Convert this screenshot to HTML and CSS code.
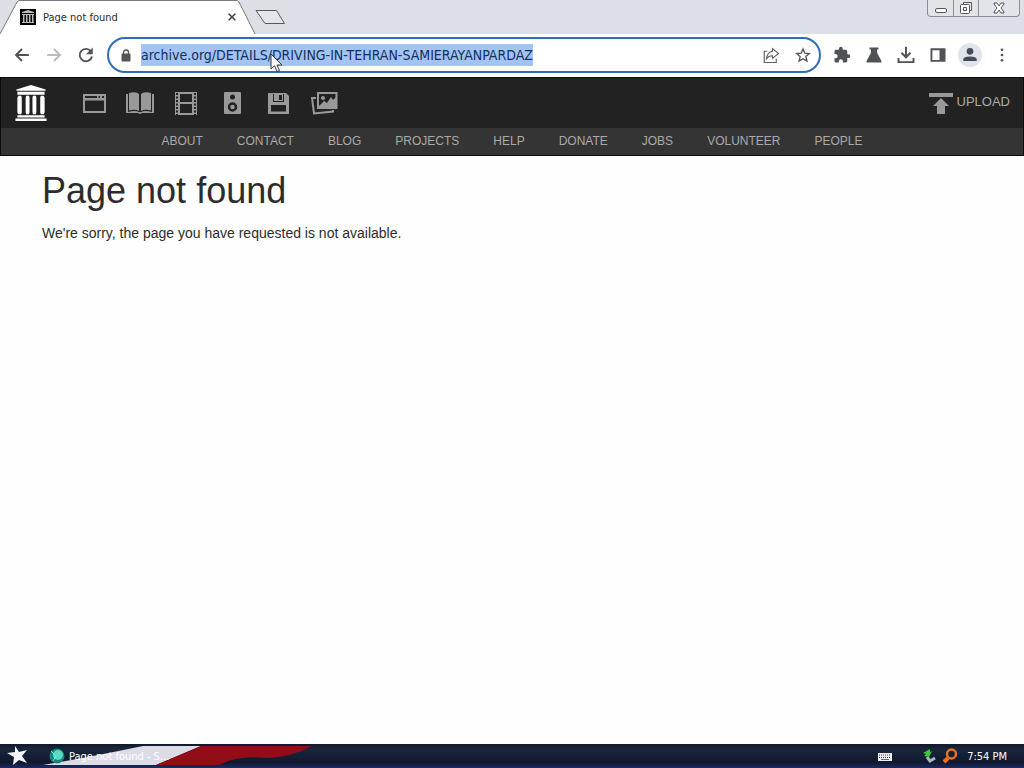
FILE: index.html
```html
<!DOCTYPE html>
<html lang="en">
<head>
<meta charset="utf-8">
<title>Page not found</title>
<link rel="stylesheet" href="styles.css">
</head>
<body>
<div class="tabstrip">
  <div class="tab">
    <svg class="tab-shape" viewBox="0 0 256 34" aria-hidden="true"><path d="M0 34 17 2Q18 .5 20 .5H236Q238 .5 239 2L255 34Z" fill="#fff"/><path d="M0 34 17 2Q18 .5 20 .5H236Q238 .5 239 2L255 34" fill="none" stroke="#777a7e"/></svg>
    <svg class="favicon" viewBox="0 0 16 16" aria-hidden="true"><path d="M0 0h16v16H0z" fill="#000"/><path d="M8 1 14 3v1H2V3zM2 5h12v1H2zM2 13h12v1H2zM3 6h1.500v7H3zM6 6h1.500v7H6zM9 6h1.500v7H9zM12 6h1.500v7H12z" fill="#bbb"/></svg>
    <span class="tab-title">Page not found</span>
    <button class="tab-close" aria-label="Close tab"><svg width="8" height="8" viewBox="0 0 8 8"><path d="m.7.700 6.600 6.600m0-6.600L.7 7.300" stroke="#444" stroke-width="1.600"/></svg></button>
  </div>
  <button class="new-tab" aria-label="New tab"><svg width="32" height="16" viewBox="0 0 32 16"><path d="M1 1.500h20.500l8 13H10z" fill="#e3e6eb" stroke="#55585c"/></svg></button>
  <div class="window-controls">
    <button aria-label="Minimize"><svg width="14" height="14" viewBox="0 0 14 14"><rect x="1.500" y="7.500" width="11" height="4" rx="1.500" fill="#fff" stroke="#555"/></svg></button>
    <button aria-label="Restore"><svg width="14" height="14" viewBox="0 0 14 14"><path d="M4.500 3V1.500h8v8H11" fill="#eee" stroke="#555"/><rect x="1.500" y="3.500" width="9" height="9" rx="1" fill="#fff" stroke="#555"/><path d="M4.500 6.500h3v3h-3z" fill="none" stroke="#555"/></svg></button>
    <button class="close-window" aria-label="Close"><svg width="14" height="12" viewBox="0 0 14 12"><path d="M2 1h3l2 3 2-3h3v1L9 6l3 4v1H9L7 8l-2 3H2v-1l3-4-3-4z" fill="#fff" stroke="#555"/></svg></button>
  </div>
</div>

<div class="toolbar">
  <button class="tool" aria-label="Back"><svg viewBox="0 0 24 24"><path d="M21 12H4m8-8-8 8 8 8" fill="none" stroke="#505256" stroke-width="2.500"/></svg></button>
  <button class="tool" aria-label="Forward"><svg viewBox="0 0 24 24"><path d="M3 12h17m-8-8 8 8-8 8" fill="none" stroke="#b9bbbd" stroke-width="2.500"/></svg></button>
  <button class="tool" aria-label="Reload"><svg viewBox="0 0 24 24"><path d="M18.500 7A8.300 8.300 0 1 0 20 14" fill="none" stroke="#505256" stroke-width="2.500"/><path d="M21 2v9h-9z" fill="#505256"/></svg></button>
  <div class="omnibox">
    <svg class="lock" viewBox="0 0 10 13" aria-hidden="true"><path d="M2.500 5V3.500a2.500 2.500 0 0 1 5 0V5" fill="none" stroke="#555" stroke-width="1.400"/><rect x=".5" y="4.500" width="9" height="8" rx="1" fill="#555"/></svg>
    <input class="url" id="url" type="text" aria-label="Address" spellcheck="false" value="archive.org/DETAILS/DRIVING-IN-TEHRAN-SAMIERAYANPARDAZ">
    <button class="tool" aria-label="Share"><svg viewBox="0 0 24 24"><path d="M7 7H3v15h16v-5" fill="none" stroke="#5c5e62" stroke-width="1.500"/><path d="M14 3.500 22 10l-8 6.500V13q-5-.2-8 4 1-9 8-10z" fill="none" stroke="#5c5e62" stroke-width="1.500"/></svg></button>
    <button class="tool" aria-label="Bookmark"><svg class="star" viewBox="0 0 24 24"><path d="m12 3 2.700 6.300 6.800.600-5.200 4.500 1.600 6.600-5.900-3.500L6.100 21l1.600-6.600-5.200-4.500 6.800-.6z" fill="none" stroke="#505256" stroke-width="2"/></svg></button>
    <svg class="pointer" viewBox="0 0 13 20" aria-hidden="true"><path d="M1 1v15l3.500-3.300L7 18.500l2.500-1L7 12h5z" fill="#fff" stroke="#333"/></svg>
  </div>
  <button class="tool" aria-label="Extensions"><svg viewBox="0 0 24 24"><path d="M20.500 11H19V7c0-1.100-.9-2-2-2h-4V3.500a2.500 2.500 0 0 0-5 0V5H4c-1.100 0-2 .900-2 2v3.800h1.500a2.700 2.700 0 0 1 0 5.400H2V20c0 1.100.9 2 2 2h3.800v-1.500a2.700 2.700 0 0 1 5.400 0V22H17c1.100 0 2-.9 2-2v-4h1.500a2.500 2.500 0 0 0 0-5z" fill="#505256"/></svg></button>
  <button class="tool" aria-label="Experiments"><svg viewBox="0 0 24 24"><path d="M6 2h12v2.500h-2V9l6 11q.6 2-1 2H3q-1.600 0-1-2L8 9V4.500H6z" fill="#505256"/></svg></button>
  <button class="tool" aria-label="Downloads"><svg viewBox="0 0 24 24"><path d="M12 1v14M6 9l6 6 6-6M2 16v5.500h20V16" fill="none" stroke="#505256" stroke-width="2.600"/></svg></button>
  <button class="tool" aria-label="Side panel"><svg viewBox="0 0 24 24"><path d="M2 3h20v18H2zm2.500 2.500v13H14v-13z" fill="#505256" fill-rule="evenodd"/></svg></button>
  <button class="tool profile" aria-label="Profile"><svg viewBox="0 0 24 24"><circle cx="12" cy="7" r="4.500" fill="#454b57"/><path d="M3 20v-2q0-4 9-4t9 4v2z" fill="#454b57"/></svg></button>
  <button class="tool" aria-label="Menu"><svg viewBox="0 0 24 24"><g fill="#505256"><circle cx="12" cy="5" r="1.800"/><circle cx="12" cy="12" r="1.800"/><circle cx="12" cy="19" r="1.800"/></g></svg></button>
</div>

<header class="site-header">
  <div class="topnav">
    <a class="logo" href="#" aria-label="Internet Archive"><svg width="32" height="36" viewBox="0 0 32 37"><path fill="#fff" d="M16 0 31 4.500V6H1V4.500zM2 7h28v3H2zM2 31h28v2.500H2zM0 34.500h32V37H0zM3 11h3l.5 2v15l-.5 2H3l-1-2V13zM11 11h3l.5 2v15l-.5 2h-3l-.5-2V13zM18 11h3l.5 2v15l-.5 2h-3l-.5-2V13zM26 11h3l1 2v15l-1 2h-3l-.5-2V13z"/></svg></a>
    <nav class="media" aria-label="Media">
      <a href="#" aria-label="Web"><svg width="23" height="19" viewBox="0 0 23 19"><path fill="#999" fill-rule="evenodd" d="M0 0h23v19H0zM2 6.500V17h19V6.500zM2 2v2h12V2zm13.500 0v2H17V2zm3.500 0v2h2V2z"/></svg></a>
      <a href="#" aria-label="Texts"><svg width="28" height="22" viewBox="0 0 28 22"><path fill="#999" d="M3 1q7-2 10 1v17q-4-2-10-.5zM15 2q3-3 10-1v17.500q-6-1.500-10 .5zM0 2h2v18q7-2 11 0h2q4-2 11 0V2h2v19H16l-2 1-2-1H0z"/></svg></a>
      <a href="#" aria-label="Video"><svg width="22" height="23" viewBox="0 0 22 23"><path fill="#999" fill-rule="evenodd" d="M0 0h22v23H0zM5 2v8h12V2zm0 10v9h12v-9z"/><path d="M2 1v22M20 1v22" stroke="#222" stroke-width="2" stroke-dasharray="2 1.500"/></svg></a>
      <a href="#" aria-label="Audio"><svg width="17" height="22" viewBox="0 0 17 22"><rect width="17" height="22" rx="1" fill="#999"/><circle cx="8.500" cy="5" r="2.500" fill="#222"/><circle cx="8.500" cy="15" r="3.500" fill="none" stroke="#222" stroke-width="2.500"/></svg></a>
      <a href="#" aria-label="Software"><svg width="21" height="21" viewBox="0 0 21 21"><path fill="#999" fill-rule="evenodd" d="M0 0h18l3 3v18H0zM5 1v8h11V1zm-2 11v6.500h15V12z"/><path d="M6 1h9v7H6z" fill="#999"/><path d="M11 2h3v5h-3z" fill="#222"/></svg></a>
      <a href="#" aria-label="Images"><svg width="27" height="23" viewBox="0 0 27 23"><path fill="none" stroke="#999" stroke-width="2" d="M5 6H1l2 15.500 19-2V18M7 1h18.500v15H7z"/><circle cx="12" cy="6" r="2" fill="#999"/><path d="m8 14 5-5 3 2 4-6 2 3 3-3v10H8z" fill="#999"/></svg></a>
    </nav>
    <a class="upload" href="#"><svg width="24" height="21" viewBox="0 0 24 21" aria-hidden="true"><path fill="#999" d="M0 0h24v4H0zM12 5l8 8h-4v8H8v-8H4z"/></svg><span>UPLOAD</span></a>
  </div>
  <nav class="subnav" aria-label="About">
    <a href="#">ABOUT</a><a href="#">CONTACT</a><a href="#">BLOG</a><a href="#">PROJECTS</a><a href="#">HELP</a><a href="#">DONATE</a><a href="#">JOBS</a><a href="#">VOLUNTEER</a><a href="#">PEOPLE</a>
  </nav>
</header>

<main class="content">
  <h1>Page not found</h1>
  <p>We're sorry, the page you have requested is not available.</p>
</main>

<footer class="taskbar">
  <svg class="flag" viewBox="0 0 340 24" aria-hidden="true"><path d="M43 21Q90 13 143 2h58l-45 19z" fill="#dcdce6"/><path d="M201 2h111q-20 11-45 12-30-3-48 7h-63z" fill="#920d18"/></svg>
  <button class="start" aria-label="Start"><svg width="22" height="20" viewBox="0 0 22 20"><path d="m8 0 4 6 8-2-5 6 5 7-8-3-6 5 1-8-7-4 8-1z" fill="#f4f4f8"/></svg></button>
  <button class="task"><svg width="16" height="16" viewBox="0 0 16 16" aria-hidden="true"><circle cx="8" cy="8" r="7.500" fill="#16847c"/><circle cx="9" cy="7" r="5" fill="#58dbc0"/><path d="m2 3 5 5-3 5" fill="none" stroke="#8de0cd"/></svg><span>Page not found - S...</span></button>
  <div class="tray">
    <svg class="keyboard" width="14" height="8" viewBox="0 0 14 8" aria-hidden="true"><path d="M0 0h14v8H0z" fill="#eee"/><path d="M1 2h12M1 4.500h12" stroke="#334" stroke-dasharray="1 1"/><path d="M3 6.500h8" stroke="#667"/></svg>
    <svg width="14" height="15" viewBox="0 0 14 15" aria-hidden="true"><path d="m4 8 3 4 5-3" fill="none" stroke="#aab5bb" stroke-width="3"/><path d="M0 4 7 0v3l2-1-3 6-5-1 2-2z" fill="#43c43c"/></svg>
    <svg width="16" height="16" viewBox="0 0 16 16" aria-hidden="true"><circle cx="9.500" cy="6" r="4.500" fill="none" stroke="#e8711c" stroke-width="2.500"/><path d="m6 10-4 4" stroke="#e8711c" stroke-width="4"/></svg>
    <time class="clock">7:54 PM</time>
  </div>
</footer>
<script src="main.js"></script>
</body>
</html>
```

FILE: styles.css
```css
* { box-sizing: border-box; }

body {
  margin: 0;
  min-height: 100vh;
  display: flex;
  flex-direction: column;
  background: #fefefe;
  color: #2c2c2c;
  font-family: "Liberation Sans", Arial, sans-serif;
  font-size: 14px;
}

button {
  margin: 0;
  padding: 0;
  border: 0;
  background: none;
  color: inherit;
  font: inherit;
}

a { color: inherit; text-decoration: none; }
svg { display: block; flex: none; }

/* Tab strip */
.tabstrip {
  display: flex;
  height: 34px;
  background: #dcdfe6;
}

.tab {
  position: relative;
  display: flex;
  align-items: center;
  width: 255px;
  padding: 0 15px 0 20px;
}

.tab-shape { position: absolute; inset: 0; width: 256px; height: 34px; }
.favicon { position: relative; width: 16px; height: 16px; }

.tab-title {
  position: relative;
  flex: 1;
  margin-left: 7px;
  font: 11px "DejaVu Sans Condensed", "DejaVu Sans", sans-serif;
}

.tab-close { position: relative; padding: 4px; }
.new-tab { align-self: center; }

.window-controls {
  display: flex;
  align-self: flex-start;
  height: 17px;
  margin: 0 4px 0 auto;
  border: 1px solid #8b8e94;
  border-top: 0;
  border-radius: 0 0 4px 4px;
  background: #e2e4e9;
}

.window-controls button { display: grid; place-items: center; width: 25px; }
.window-controls button + button { border-left: 1px solid #8b8e94; }
.window-controls .close-window { width: 41px; }

/* Toolbar */
.toolbar {
  display: flex;
  align-items: center;
  gap: 8px;
  height: 43px;
  padding: 0 10px 1px;
  background: #fff;
}

.tool {
  display: grid;
  flex: none;
  place-items: center;
  width: 24px;
  height: 24px;
}

.tool svg { width: 18px; height: 18px; }
.tool .star { width: 16px; height: 16px; }
.profile { border-radius: 50%; background: #dfe3ea; }

.omnibox {
  position: relative;
  display: flex;
  flex: 1;
  align-items: center;
  gap: 8px;
  height: 36px;
  padding: 0 4px 0 12px;
  margin: 0 1px;
  border: 2px solid #2f6cb8;
  border-radius: 18px;
}

.lock { width: 10px; height: 13px; }

.url {
  flex: 1;
  min-width: 0;
  height: 22px;
  padding: 0;
  margin-left: 2px;
  border: 0;
  outline: 0;
  background: none;
  color: #12305c;
  font: 14px/22px "DejaVu Sans Condensed", "DejaVu Sans", sans-serif;
}

.url::selection { background: #a3c3f2; color: #12305c; }
.pointer { position: absolute; left: 161px; top: 14px; width: 13px; height: 20px; }

/* Site header */
.site-header { border: 1px solid #0c0c0c; background: #343434; }

.topnav {
  display: flex;
  align-items: center;
  height: 50px;
  padding: 0 13px 0 14px;
  background: #222;
}

.media { display: flex; align-items: center; margin-left: 24px; }
.media a { display: grid; place-items: center; width: 46px; }

.upload {
  display: flex;
  gap: 4px;
  margin-left: auto;
  color: #aaa;
  font-size: 13px;
  line-height: 17px;
}

.subnav {
  display: flex;
  justify-content: center;
  gap: 34px;
  color: #aaa;
  font-size: 12px;
  line-height: 27px;
}

/* Page content */
.content { flex: 1; padding: 15px 42px; }
h1 { margin: 0; font-size: 36px; font-weight: 400; line-height: 40px; }
p { margin: 12px 0 0; line-height: 20px; }

/* Taskbar */
.taskbar {
  position: relative;
  display: flex;
  align-items: center;
  height: 24px;
  padding: 0 17px 0 7px;
  background: linear-gradient(#10182a, #1a263c 20%, #10182e 75%, #1d2a62);
  color: #fff;
  font: 11px "DejaVu Sans Condensed", "DejaVu Sans", sans-serif;
}

.flag { position: absolute; left: 0; top: 0; width: 340px; height: 24px; }
.start { position: relative; }
.task { position: relative; display: flex; align-items: center; gap: 4px; margin-left: 20px; }
.tray { display: flex; align-items: center; gap: 5px; margin-left: auto; }
.keyboard { margin: 2px 26px 0 0; }
.clock { margin-left: 4px; }
```

FILE: main.js
```js
const url = document.getElementById("url");
url.focus();
url.select();
url.scrollLeft = 0;
```
